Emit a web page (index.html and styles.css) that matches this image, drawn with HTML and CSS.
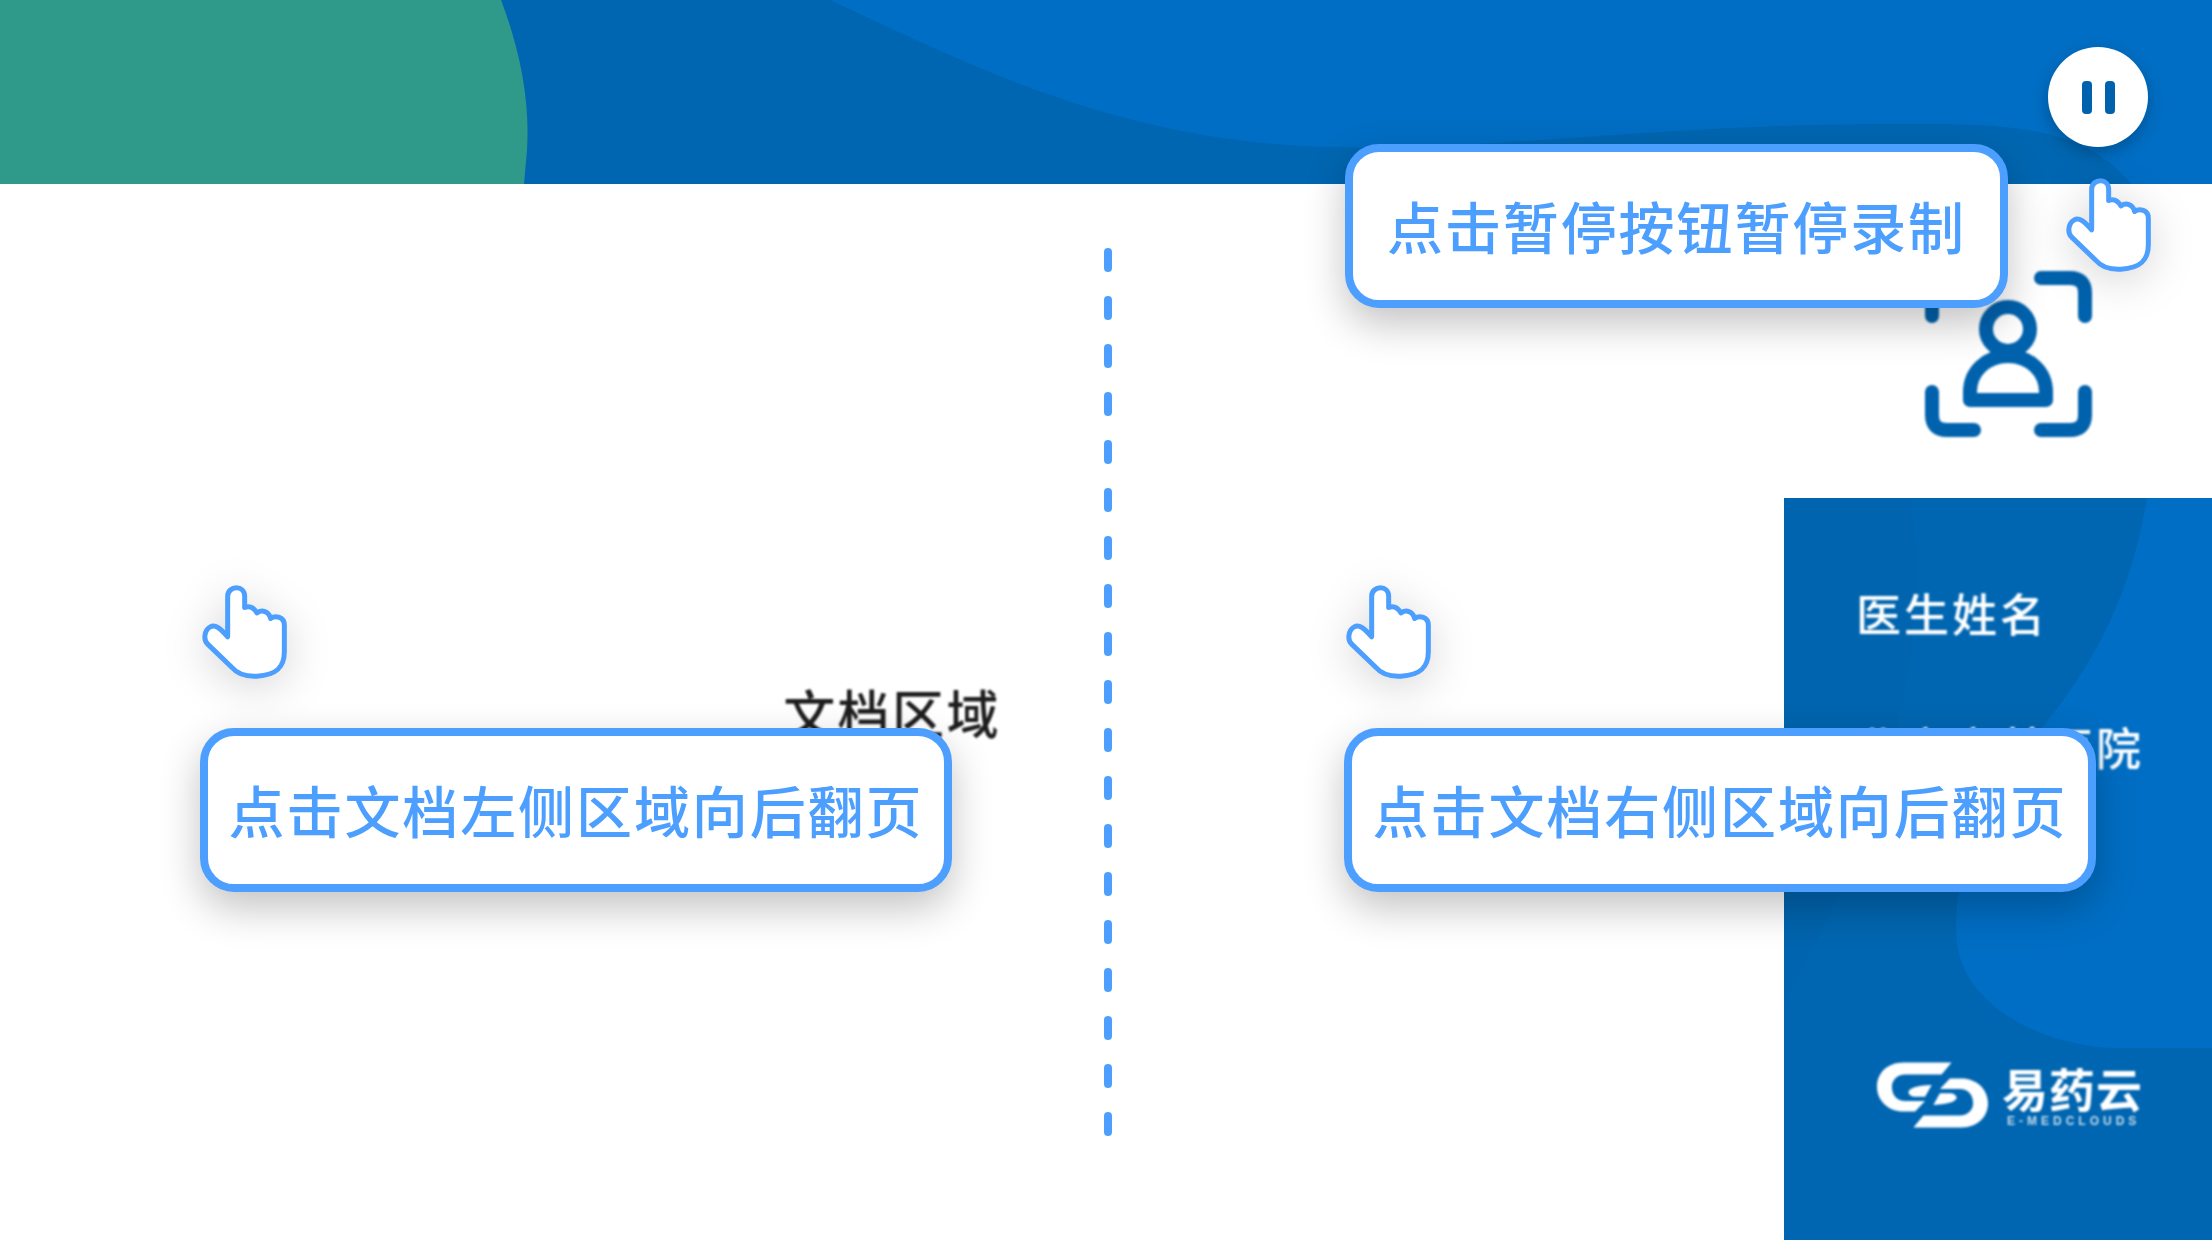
FILE: index.html
```html
<!DOCTYPE html>
<html lang="zh-CN">
<head>
<meta charset="utf-8">
<title>录制引导</title>
<link rel="stylesheet" href="styles.css">
</head>
<body>
<div class="screen">
  <header class="topbar">
    <svg class="bg-art" viewBox="0 0 2212 184" preserveAspectRatio="none" aria-hidden="true">
      <path class="wave" d="M830 0C960 60 1120 145 1340 147C1500 150 1650 125 1880 124C1990 124 2080 120 2131 184H2212V0Z"/>
      <path class="green" d="M0 0H501C520 50 530 100 527 150L524 184H0Z"/>
    </svg>
    <button class="pause" type="button" aria-label="暂停"><span></span><span></span></button>
  </header>
  <div class="body">
    <main class="doc"><span class="doc-label">文档区域</span></main>
    <aside class="side">
      <div class="face">
        <svg class="face-icon" viewBox="1920 266 178 176" aria-hidden="true">
          <path d="M2041 278H2070Q2085 278 2085 293V316M2085 392V415Q2085 430 2070 430H2041M1974 430H1947Q1932 430 1932 415V392M1932 316V293Q1932 278 1947 278H1974"/>
          <circle cx="2008" cy="329" r="22"/>
          <path d="M1970 400H2046V392C2046 372 2030 356 2008 356C1986 356 1970 372 1970 392Z"/>
        </svg>
      </div>
      <div class="panel">
        <svg class="bg-art" viewBox="1784 498 428 742" preserveAspectRatio="none" aria-hidden="true">
          <path class="wave-soft" d="M1910 498C1930 620 1900 800 1784 1000V498Z"/>
          <path class="wave" d="M2147 498C2130 600 2090 670 2040 730C1980 800 1950 880 1957 943C1965 1010 2050 1048 2120 1048H2212V498Z"/>
        </svg>
        <div class="doctor">
          <p class="doctor-line">医生姓名</p>
          <p class="doctor-line">北京市某医院</p>
        </div>
        <div class="logo">
          <svg class="logo-mark" viewBox="50 62 335 196" aria-hidden="true">
            <path d="M275 62H130C80 62 50 95 50 135C50 178 85 210 130 210H165L195 178H135C110 178 95 160 95 135C95 112 115 98 135 98H245Z"/>
            <path d="M160 258H305C355 258 385 225 385 185C385 142 350 110 305 110H270L240 142H300C325 142 340 160 340 185C340 208 320 222 300 222H190Z"/>
            <path d="M145 150C150 140 165 132 215 130L195 165H165C155 165 145 160 145 150Z"/>
            <path d="M290 170C285 180 270 188 220 190L240 155H270C280 155 290 160 290 170Z"/>
          </svg>
          <div class="logo-text">
            <span class="logo-cn">易药云</span>
            <span class="logo-en">E-MEDCLOUDS</span>
          </div>
        </div>
      </div>
    </aside>
  </div>

  <div class="divider">
    <span></span><span></span><span></span><span></span><span></span>
    <span></span><span></span><span></span><span></span><span></span>
    <span></span><span></span><span></span><span></span><span></span>
    <span></span><span></span><span></span><span></span>
  </div>

  <div class="tip tip-pause">点击暂停按钮暂停录制</div>
  <div class="tip tip-left">点击文档左侧区域向后翻页</div>
  <div class="tip tip-right">点击文档右侧区域向后翻页</div>

  <svg class="hand hand-pause" viewBox="72 42 258 284" aria-hidden="true"><path d="M152 200V78C152 62 165 53 178 53C192 53 203 62 203 78V112C220 105 232 115 240 128C255 118 275 122 281 145C295 135 322 140 322 165V245C322 290 300 315 240 318C200 320 180 310 165 292L92 222C78 208 82 180 100 170C115 162 130 175 152 200Z"/></svg>
  <svg class="hand hand-left" viewBox="72 42 258 284" aria-hidden="true"><path d="M152 200V78C152 62 165 53 178 53C192 53 203 62 203 78V112C220 105 232 115 240 128C255 118 275 122 281 145C295 135 322 140 322 165V245C322 290 300 315 240 318C200 320 180 310 165 292L92 222C78 208 82 180 100 170C115 162 130 175 152 200Z"/></svg>
  <svg class="hand hand-right" viewBox="72 42 258 284" aria-hidden="true"><path d="M152 200V78C152 62 165 53 178 53C192 53 203 62 203 78V112C220 105 232 115 240 128C255 118 275 122 281 145C295 135 322 140 322 165V245C322 290 300 315 240 318C200 320 180 310 165 292L92 222C78 208 82 180 100 170C115 162 130 175 152 200Z"/></svg>
</div>
</body>
</html>
```
FILE: styles.css
```css
* { box-sizing: border-box; }
html, body { margin: 0; padding: 0; background: #fff; }
body { font-family: "Noto Sans CJK SC", "Noto Sans", sans-serif; }

.screen {
  position: relative;
  width: 2212px;
  height: 1240px;
  overflow: hidden;
  display: flex;
  flex-direction: column;
}

.bg-art { position: absolute; inset: 0; width: 100%; height: 100%; display: block; }
.wave { fill: #006ec4; }
.wave-soft { fill: #0064ae; }
.green { fill: #2f9a8a; }

.topbar {
  position: relative;
  flex: 0 0 184px;
  background: #0066b1;
}

.pause {
  position: absolute;
  left: 2048px;
  top: 47px;
  width: 100px;
  height: 100px;
  padding: 0;
  border: 0;
  border-radius: 50%;
  background: #fff;
  box-shadow: 0 6px 16px rgba(0, 0, 0, .24);
  display: flex;
  justify-content: center;
  align-items: center;
  gap: 13px;
}
.pause span {
  width: 10px;
  height: 33px;
  border-radius: 4px;
  background: #0062ad;
}

.body { flex: 1; display: flex; min-height: 0; }

.doc {
  flex: 1;
  display: flex;
  justify-content: center;
  align-items: center;
}
.doc-label {
  font-size: 52px;
  font-weight: 500;
  line-height: 60px;
  letter-spacing: 2.4px;
  color: #1d1d1d;
  filter: blur(.8px);
}

.side { flex: 0 0 428px; display: flex; flex-direction: column; }

.face { flex: 0 0 314px; position: relative; }
.face-icon {
  position: absolute;
  left: 136px;
  top: 82px;
  width: 178px;
  height: 176px;
  fill: none;
  stroke: #0062ad;
  stroke-width: 14;
  stroke-linecap: round;
  stroke-linejoin: round;
  filter: blur(.8px);
}

.panel {
  position: relative;
  flex: 1;
  background: #0066b1;
  color: #fff;
  display: flex;
  flex-direction: column;
  justify-content: space-between;
  padding: 90px 0 112px 72px;
}

.doctor { position: relative; filter: blur(.8px); }
.doctor-line {
  margin: 0 0 84px;
  font-size: 45px;
  font-weight: 500;
  line-height: 50px;
  letter-spacing: 3px;
  white-space: nowrap;
}

.logo {
  position: relative;
  display: flex;
  align-items: flex-start;
  gap: 14px;
  margin-left: 21px;
  filter: blur(.8px);
}
.logo-mark { width: 111px; height: 66px; fill: #fff; display: block; }
.logo-text { display: flex; flex-direction: column; }
.logo-cn {
  font-size: 46px;
  font-weight: 700;
  line-height: 50px;
  letter-spacing: 1px;
}
.logo-en {
  font-family: "Liberation Sans", sans-serif;
  font-size: 12px;
  font-weight: 700;
  line-height: 14px;
  letter-spacing: 4px;
  margin-left: 5px;
  margin-top: 2px;
  opacity: .75;
  white-space: nowrap;
}

.divider {
  position: absolute;
  left: 1104px;
  top: 248px;
  display: flex;
  flex-direction: column;
  gap: 24px;
}
.divider span {
  display: block;
  width: 8px;
  height: 24px;
  border-radius: 4px;
  background: #4c9eff;
}

.tip {
  position: absolute;
  height: 164px;
  border: 8px solid #4c9eff;
  border-radius: 34px;
  background: #fff;
  color: #4c9eff;
  font-size: 56px;
  font-weight: 500;
  letter-spacing: 1.9px;
  white-space: nowrap;
  padding-bottom: 4px;
  display: flex;
  align-items: center;
  justify-content: center;
  box-shadow: 0 16px 40px rgba(0, 0, 0, .24);
}
.tip-pause { left: 1345px; top: 144px; width: 663px; }
.tip-left { left: 200px; top: 728px; width: 752px; }
.tip-right { left: 1344px; top: 728px; width: 752px; }

.hand {
  position: absolute;
  width: 86px;
  height: 95px;
  fill: #fff;
  stroke: #4c9eff;
  stroke-width: 15;
  stroke-linejoin: round;
  filter: drop-shadow(0 8px 22px rgba(0, 0, 0, .16));
}
.hand-pause { left: 2065px; top: 177px; }
.hand-left { left: 201px; top: 584px; }
.hand-right { left: 1345px; top: 584px; }
```
